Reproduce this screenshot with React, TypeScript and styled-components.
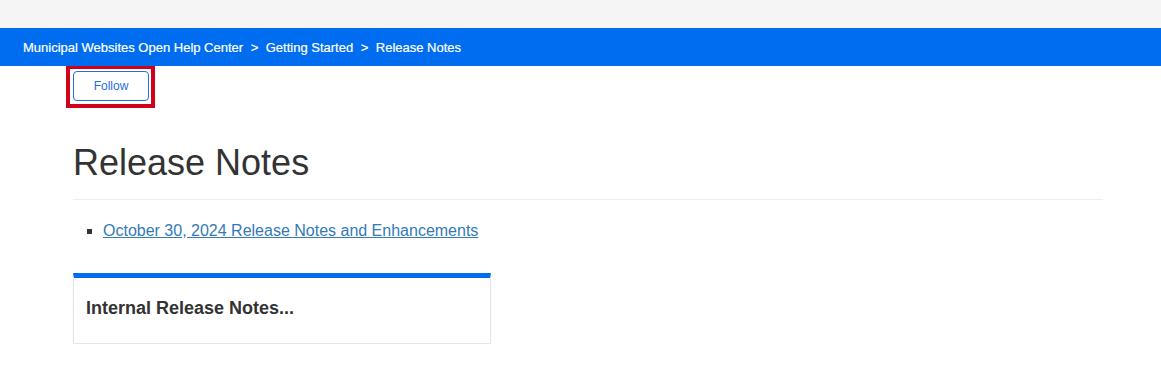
import React from "react";
import styled, { createGlobalStyle } from "styled-components";

const GlobalStyle = createGlobalStyle`
  html, body { margin: 0; padding: 0; background: #ffffff; }
  body { font-family: "Liberation Sans", Arial, sans-serif; color: #333333; }
  * { box-sizing: border-box; }
`;

const TopStrip = styled.div`
  height: 28px;
  background: #f5f5f5;
`;

const BreadcrumbBar = styled.nav`
  height: 38px;
  background: #006df0;
  display: flex;
  align-items: center;
  padding-left: 23px;
  font-size: 13px;
  color: #ffffff;
  position: relative;
  z-index: 1;
`;

const Crumb = styled.a`
  color: #ffffff;
  text-decoration: none;
  -webkit-text-stroke: 0.2px #ffffff;
`;

const Separator = styled.span`
  margin: 0 7.5px;
  -webkit-text-stroke: 0.2px #ffffff;
`;

const Page = styled.main`
  padding-left: 66px;
`;

const FocusRing = styled.div`
  display: inline-flex;
  border: 4px solid #d0021b;
  border-top-width: 3px;
  padding: 2px 2px 3px 3px;
`;

const FollowButton = styled.button`
  width: 76px;
  height: 30px;
  border: 1px solid #1f6fe0;
  border-radius: 4px;
  background: #ffffff;
  color: #1f6fe0;
  font-family: "Liberation Sans", Arial, sans-serif;
  font-size: 12px;
  padding: 0;
  cursor: pointer;
`;

const Content = styled.section`
  margin-left: 7px;
  width: 1030px;
`;

const Title = styled.h1`
  margin: 35px 0 0;
  font-size: 36px;
  font-weight: 400;
  line-height: 1.1;
  color: #333333;
`;

const Divider = styled.hr`
  margin: 16px 0 0;
  border: 0;
  border-top: 1px solid #eeeeee;
`;

const ArticleList = styled.ul`
  margin: 20px 0 0;
  padding-left: 30px;
  list-style: square;
  font-size: 16px;
  line-height: 1.42857;
`;

const ArticleLink = styled.a`
  color: #337ab7;
  text-decoration: underline;
`;

const Card = styled.div`
  margin-top: 31px;
  width: 418px;
  border: 1px solid #e6e6e6;
  border-top: 5px solid #006df0;
  box-shadow: 0 1px 2px rgba(0, 0, 0, 0.05);
  padding: 19px 12px 24px;
`;

const CardTitle = styled.h3`
  margin: 0;
  font-size: 18px;
  font-weight: 700;
  line-height: 22px;
  color: #333333;
`;

export default function App() {
  return (
    <>
      <GlobalStyle />
      <TopStrip />
      <BreadcrumbBar>
        <Crumb href="#">Municipal Websites Open Help Center</Crumb>
        <Separator>&gt;</Separator>
        <Crumb href="#">Getting Started</Crumb>
        <Separator>&gt;</Separator>
        <Crumb href="#">Release Notes</Crumb>
      </BreadcrumbBar>
      <Page>
        <FocusRing>
          <FollowButton>Follow</FollowButton>
        </FocusRing>
        <Content>
          <Title>Release Notes</Title>
          <Divider />
          <ArticleList>
            <li>
              <ArticleLink href="#">
                October 30, 2024 Release Notes and Enhancements
              </ArticleLink>
            </li>
          </ArticleList>
          <Card>
            <CardTitle>Internal Release Notes...</CardTitle>
          </Card>
        </Content>
      </Page>
    </>
  );
}
